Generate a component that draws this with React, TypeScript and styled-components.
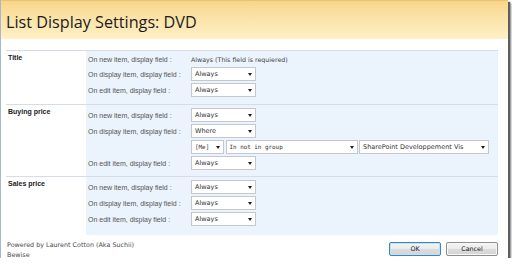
import React from 'react';
import styled, { createGlobalStyle } from 'styled-components';

const GlobalStyle = createGlobalStyle`
  html, body {
    margin: 0;
    padding: 0;
    background: #ffffff;
  }
`;

const Window = styled.div`
  box-sizing: border-box;
  width: 508px;
  height: 258px;
  background: #ffffff;
  border-left: 1px solid #a9b8c9;
  box-shadow: 2px 2px 1px #5e5e5e, 3px 3px 2px #8a8a8a;
  display: flex;
  flex-direction: column;
  font-family: 'Liberation Sans', Arial, sans-serif;
`;

const Header = styled.div`
  height: 39px;
  flex-shrink: 0;
  background: linear-gradient(to bottom, #f7d68a 0%, #fbe2a5 40%, #fff0c6 100%);
  border-top: 1px solid #e9c272;
  box-sizing: border-box;
  padding: 10px 0 0 5px;
`;

const Title = styled.h1`
  margin: 0;
  font-family: 'Open Sans', 'DejaVu Sans', sans-serif;
  font-weight: 400;
  font-size: 16.2px;
  line-height: 22px;
  color: #1b1b1b;
`;

const Body = styled.div`
  padding: 11px 10px 0 5px;
`;

const Section = styled.div`
  display: grid;
  grid-template-columns: 80px 1fr;
  border-top: 1px solid #d6dce4;
`;

const SectionName = styled.div`
  font-weight: 700;
  font-size: 7px;
  color: #222;
  padding: 3px 0 0 2px;
`;

const Fields = styled.div<{ $bottom: number }>`
  background: #ebf3fd;
  padding: 2px 0 ${p => p.$bottom}px 2px;
`;

const Row = styled.div`
  display: flex;
  align-items: center;
  min-height: 13px;
`;

const FieldLabel = styled.div`
  width: 103px;
  flex-shrink: 0;
  font-size: 7px;
  color: #555;
`;

const Note = styled.div`
  font-family: 'DejaVu Sans', Verdana, sans-serif;
  font-size: 6.3px;
  color: #444;
`;

const Selects = styled.div`
  display: flex;
  gap: 1.5px;
`;

const Select = styled.div<{ $w: number; $mono?: boolean }>`
  box-sizing: border-box;
  width: ${p => p.$w}px;
  height: 14px;
  margin: 1px 0;
  background: #ffffff;
  border: 1px solid #c4c8cd;
  display: flex;
  align-items: center;
  justify-content: space-between;
  padding: 0 3px 0 3px;
  font-family: ${p => (p.$mono ? "'DejaVu Sans Mono', 'Liberation Mono', monospace" : "'DejaVu Sans', Verdana, sans-serif")};
  font-size: ${p => (p.$mono ? 5.9 : 6.5)}px;
  color: #333;
  white-space: nowrap;
  overflow: hidden;
`;

const Arrow = styled.span`
  flex-shrink: 0;
  width: 0;
  height: 0;
  margin-left: 2px;
  border-left: 2.5px solid transparent;
  border-right: 2.5px solid transparent;
  border-top: 3px solid #1e1e1e;
`;

const Footer = styled.div`
  display: flex;
  justify-content: space-between;
  padding: 5px 10px 0 6px;
`;

const Credits = styled.div`
  font-family: 'DejaVu Sans', Verdana, sans-serif;
  font-size: 6.4px;
  line-height: 10px;
  color: #4a4a4a;
`;

const Buttons = styled.div`
  display: flex;
  gap: 5px;
  padding-top: 2px;
`;

const Button = styled.button<{ $focus?: boolean }>`
  box-sizing: border-box;
  width: 52px;
  height: 14px;
  padding: 0;
  border: 1px solid ${p => (p.$focus ? '#3d86bd' : '#8e8e8e')};
  border-radius: 2px;
  background: linear-gradient(to bottom, #f4f4f4 0%, #ebebeb 50%, #dcdcdc 51%, #d4d4d4 100%);
  box-shadow: inset 0 0 0 1px ${p => (p.$focus ? '#bfe3f5' : '#f8f8f8')};
  font-family: 'DejaVu Sans', Verdana, sans-serif;
  font-size: 6.4px;
  color: #222;
`;

type Field = { label: string; values?: { text: string; w: number; mono?: boolean }[]; note?: string };

const always = [{ text: 'Always', w: 65 }];

const sections: { name: string; bottom: number; fields: Field[] }[] = [
  {
    name: 'Title',
    bottom: 6,
    fields: [
      { label: 'On new item, display field :', note: 'Always (This field is requiered)' },
      { label: 'On display item, display field :', values: always },
      { label: 'On edit item, display field :', values: always },
    ],
  },
  {
    name: 'Buying price',
    bottom: 5,
    fields: [
      { label: 'On new item, display field :', values: always },
      { label: 'On display item, display field :', values: [{ text: 'Where', w: 65 }] },
      {
        label: '',
        values: [
          { text: '[Me]', w: 33, mono: true },
          { text: 'In not in group', w: 132, mono: true },
          { text: 'SharePoint Developpement Vis', w: 130 },
        ],
      },
      { label: 'On edit item, display field :', values: always },
    ],
  },
  {
    name: 'Sales price',
    bottom: 8,
    fields: [
      { label: 'On new item, display field :', values: always },
      { label: 'On display item, display field :', values: always },
      { label: 'On edit item, display field :', values: always },
    ],
  },
];

const App = () => {
  return (
    <>
      <GlobalStyle />
      <Window>
        <Header>
          <Title>List Display Settings: DVD</Title>
        </Header>
        <Body>
          {sections.map(s => (
            <Section key={s.name}>
              <SectionName>{s.name}</SectionName>
              <Fields $bottom={s.bottom}>
                {s.fields.map((f, i) => (
                  <Row key={i}>
                    <FieldLabel>{f.label}</FieldLabel>
                    {f.note && <Note>{f.note}</Note>}
                    {f.values && (
                      <Selects>
                        {f.values.map(v => (
                          <Select key={v.text} $w={v.w} $mono={v.mono}>
                            <span>{v.text}</span>
                            <Arrow />
                          </Select>
                        ))}
                      </Selects>
                    )}
                  </Row>
                ))}
              </Fields>
            </Section>
          ))}
        </Body>
        <Footer>
          <Credits>
            Powered by Laurent Cotton (Aka Suchii)
            <br />
            Bewise
          </Credits>
          <Buttons>
            <Button $focus>OK</Button>
            <Button>Cancel</Button>
          </Buttons>
        </Footer>
      </Window>
    </>
  );
};

export default App;
